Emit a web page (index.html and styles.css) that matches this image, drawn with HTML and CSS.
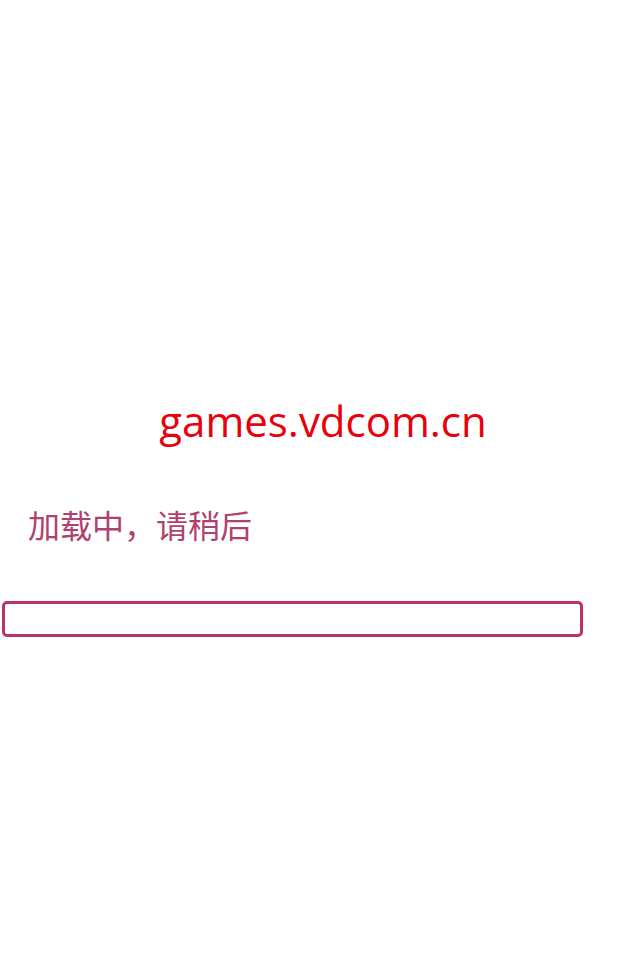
FILE: index.html
```html
<!DOCTYPE html>
<html lang="zh">
<head>
<meta charset="utf-8">
<title>games.vdcom.cn</title>
<link rel="stylesheet" href="styles.css">
</head>
<body>
<main class="page">
  <h1 class="site">games.vdcom.cn</h1>
  <p class="loading">加载中，请稍后</p>
  <div class="bar"></div>
</main>
</body>
</html>
```
FILE: styles.css
```css
html, body {
  margin: 0;
  padding: 0;
  background: #ffffff;
}
.page {
  width: 640px;
  height: 960px;
  display: flex;
  flex-direction: column;
  padding-top: 394px;
  box-sizing: border-box;
}
.site {
  margin: 0;
  width: 646px;
  text-align: center;
  font-family: "Open Sans", "Noto Sans", sans-serif;
  font-weight: 400;
  font-size: 42px;
  line-height: 54px;
  color: #e8000b;
}
.loading {
  margin: 56px 0 0 28px;
  font-family: "Noto Sans CJK SC", sans-serif;
  font-size: 32px;
  line-height: 40px;
  color: #b0406e;
}
.bar {
  margin: 57px 0 0 2px;
  width: 581px;
  height: 36px;
  box-sizing: border-box;
  border: 3px solid #b8336a;
  border-radius: 5px;
}
```
